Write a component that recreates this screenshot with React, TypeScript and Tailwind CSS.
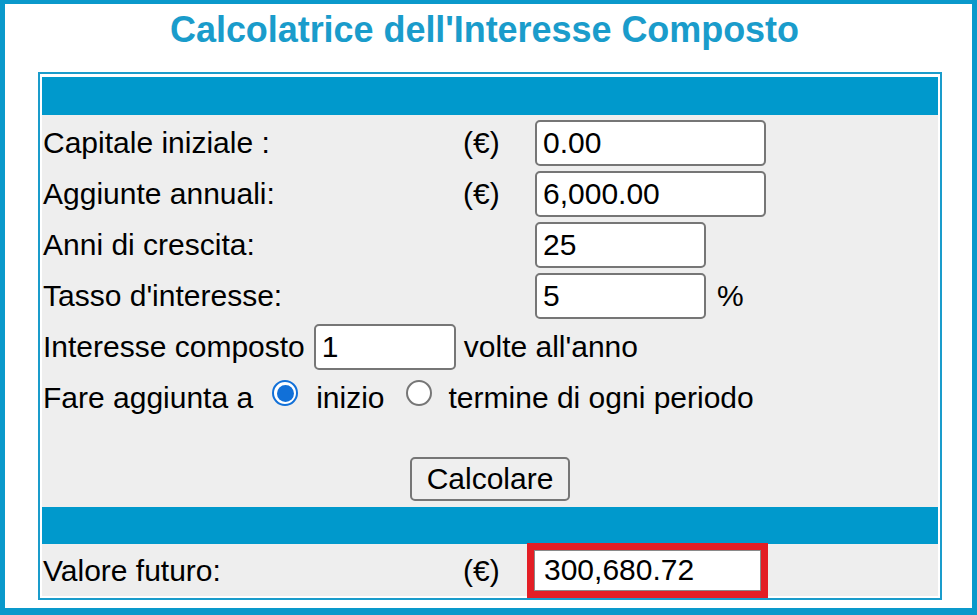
import React from "react";

function Field({ value, w }: { value: string; w: string }) {
  return (
    <input
      readOnly
      value={value}
      className={`${w} h-[46px] shrink-0 rounded-[5px] border-2 border-[#767676] bg-white px-[6px] text-[30px] leading-none text-black outline-none`}
    />
  );
}

function Radio({ checked }: { checked?: boolean }) {
  if (checked) {
    return (
      <span className="mb-[9px] flex h-[26px] w-[26px] shrink-0 items-center justify-center rounded-full border-2 border-[#1170d8] bg-white">
        <span className="h-[17px] w-[17px] rounded-full bg-[#1170d8]" />
      </span>
    );
  }
  return <span className="mb-[9px] h-[26px] w-[26px] shrink-0 rounded-full border-2 border-[#767676] bg-white" />;
}

export default function App() {
  return (
    <div className="box-border h-[615px] w-[977px] overflow-hidden border-t-[4px] border-l-[5px] border-r-[5px] border-b-[7px] border-[#0a99cb] bg-white font-['Liberation_Sans',Arial,sans-serif] text-black">
      <h1 className="pt-[5px] pr-[8px] text-center text-[36px] font-bold leading-[41px] tracking-[-0.05px] text-[#1a9ccb]">
        Calcolatrice dell'Interesse Composto
      </h1>
      <div className="mt-[22px] ml-[33px] w-[904px] border-2 border-[#1a9ccb] bg-white px-[2px] pt-[3px] pb-[2px] text-[30px]">
        <div className="h-[38px] bg-[#0099cc]" />
        <div className="h-[392px] bg-[#eeeeee] pt-[2px]">
          <div className="flex h-[51px] items-center">
            <span className="w-[421px] pl-[1px]">Capitale iniziale :</span>
            <span className="w-[72px]">(€)</span>
            <Field value="0.00" w="w-[231px]" />
          </div>
          <div className="flex h-[51px] items-center">
            <span className="w-[421px] pl-[1px]">Aggiunte annuali:</span>
            <span className="w-[72px]">(€)</span>
            <Field value="6,000.00" w="w-[231px]" />
          </div>
          <div className="flex h-[51px] items-center">
            <span className="w-[421px] pl-[1px]">Anni di crescita:</span>
            <span className="w-[72px]" />
            <Field value="25" w="w-[171px]" />
          </div>
          <div className="flex h-[51px] items-center">
            <span className="w-[421px] pl-[1px]">Tasso d'interesse:</span>
            <span className="w-[72px]" />
            <Field value="5" w="w-[171px]" />
            <span className="ml-[11px]">%</span>
          </div>
          <div className="flex h-[51px] items-center pl-[1px]">
            <span>Interesse composto</span>
            <span className="ml-[9px]">
              <Field value="1" w="w-[142px]" />
            </span>
            <span className="ml-[8px]">volte all'anno</span>
          </div>
          <div className="flex h-[51px] items-center pl-[1px]">
            <span>Fare aggiunta a</span>
            <span className="ml-[19px] flex">
              <Radio checked />
            </span>
            <span className="ml-[18px]">inizio</span>
            <span className="ml-[21px] flex">
              <Radio />
            </span>
            <span className="ml-[17px]">termine di ogni periodo</span>
          </div>
          <div className="mt-[34px] flex justify-center">
            <button className="h-[44px] w-[160px] rounded-[5px] border-2 border-[#767676] bg-[#efefef] text-[30px] leading-none text-black">
              Calcolare
            </button>
          </div>
        </div>
        <div className="h-[37px] bg-[#0099cc]" />
        <div className="flex h-[52px] items-center bg-[#eeeeee]">
          <span className="w-[421px] pl-[1px]">Valore futuro:</span>
          <span className="w-[64px]">(€)</span>
          <span className="relative z-10 flex h-[55px] w-[241px] shrink-0 border-[7px] border-[#e31e25]">
            <input
              readOnly
              value="300,680.72"
              className="h-[41px] w-[227px] border border-[#8a8a8a] bg-white pl-[9px] text-[30px] leading-none text-black outline-none"
            />
          </span>
        </div>
      </div>
    </div>
  );
}
